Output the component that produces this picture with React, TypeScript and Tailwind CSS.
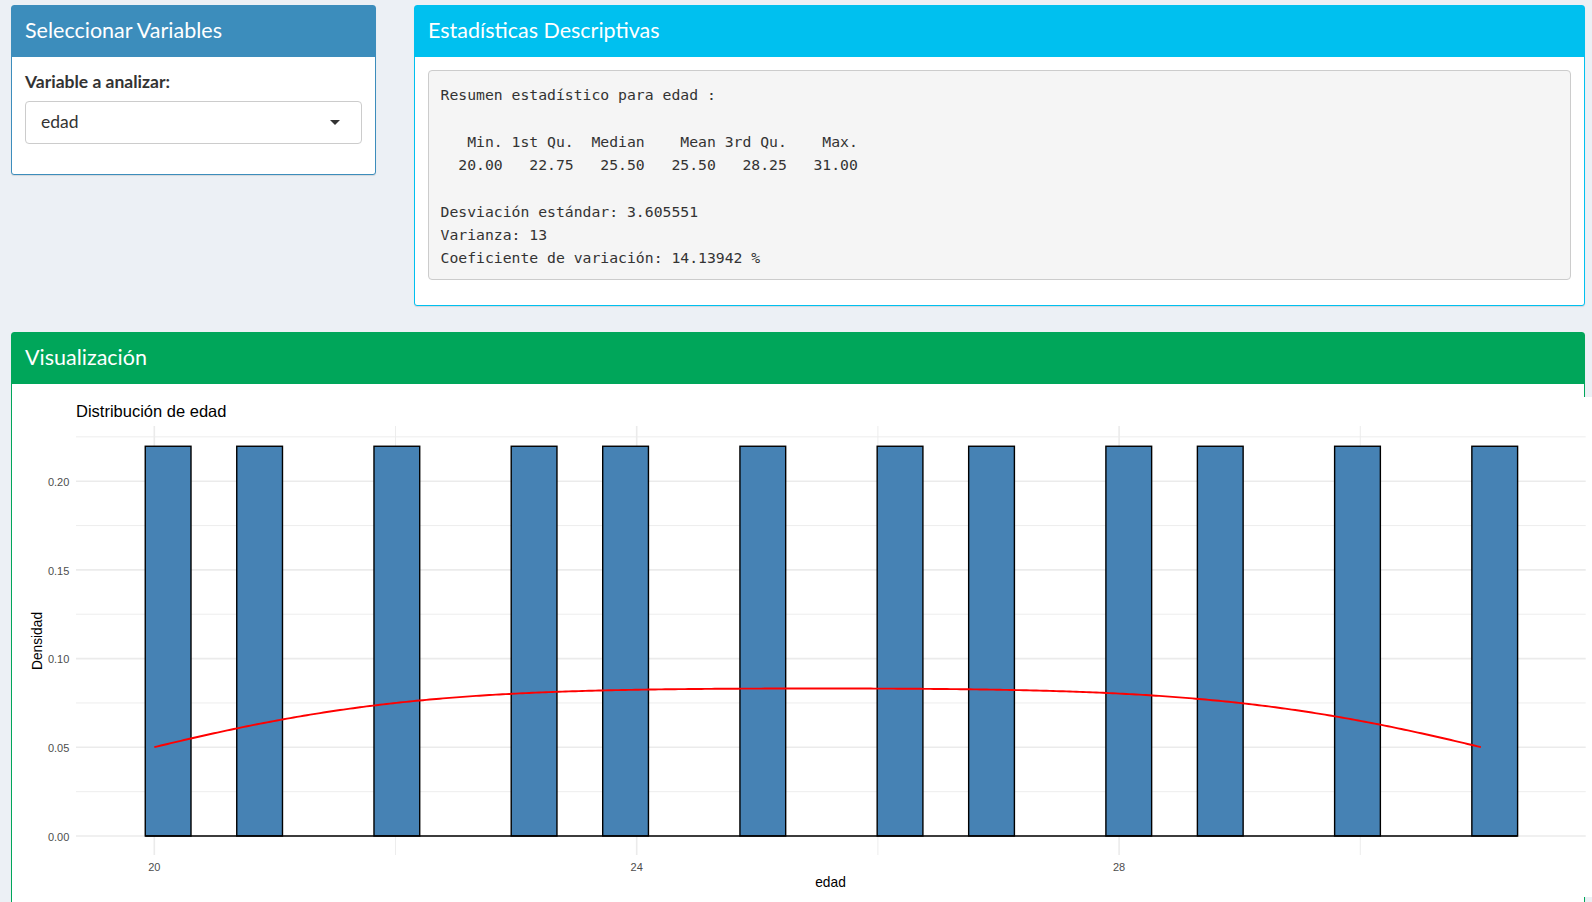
import React from "react";

const W = 1571;
const H = 500;
const xpx = (d: number) => 132.3 + (d - 20) * 120.6;
const ypx = (v: number) => 439 - v * 1774;
const BW = 11 / 29;
const B0 = 19.925;
const data = [20, 21, 22, 23, 24, 25, 26, 27, 28, 29, 30, 31];

function Chart() {
  const counts = new Array(30).fill(0);
  data.forEach((v) => {
    const k = Math.min(29, Math.floor((v - B0) / BW));
    counts[k]++;
  });
  const h = 1.9741;
  const pts: string[] = [];
  for (let i = 0; i <= 400; i++) {
    const x = 20 + (11 * i) / 400;
    let s = 0;
    data.forEach((xi) => {
      const z = (x - xi) / h;
      s += Math.exp(-0.5 * z * z);
    });
    const d = s / (data.length * h * Math.sqrt(2 * Math.PI));
    pts.push(`${xpx(x).toFixed(2)},${ypx(d).toFixed(2)}`);
  }
  const panelL = 54;
  const panelR = 1563.7;
  const panelT = 29;
  const panelB = 458;
  const majorY = [0, 0.05, 0.1, 0.15, 0.2];
  const minorY = [0.025, 0.075, 0.125, 0.175, 0.225];
  const majorX = [20, 24, 28];
  const minorX = [22, 26, 30];
  const font = '"Liberation Sans", Arial, sans-serif';
  return (
    <svg width={W} height={H} className="block shrink-0" style={{ fontFamily: font }}>
      <rect x={0} y={0} width={W} height={H} fill="#ffffff" />
      <text x={54} y={20.3} fontSize={16.5} fill="#000">
        Distribución de edad
      </text>
      {minorY.map((v) => (
        <line key={"my" + v} x1={panelL} x2={panelR} y1={ypx(v)} y2={ypx(v)} stroke="#EBEBEB" strokeWidth={0.9} />
      ))}
      {minorX.map((v) => (
        <line key={"mx" + v} x1={xpx(v)} x2={xpx(v)} y1={panelT} y2={panelB} stroke="#EBEBEB" strokeWidth={0.9} />
      ))}
      {majorY.map((v) => (
        <line key={"My" + v} x1={panelL} x2={panelR} y1={ypx(v)} y2={ypx(v)} stroke="#EBEBEB" strokeWidth={1.6} />
      ))}
      {majorX.map((v) => (
        <line key={"Mx" + v} x1={xpx(v)} x2={xpx(v)} y1={panelT} y2={panelB} stroke="#EBEBEB" strokeWidth={1.6} />
      ))}
      {counts.map((c, k) => {
        if (!c) return null;
        const x0 = xpx(B0 + k * BW);
        const x1 = xpx(B0 + (k + 1) * BW);
        const dens = c / (data.length * BW);
        const y = ypx(dens);
        return (
          <rect key={k} x={x0} y={y} width={x1 - x0} height={ypx(0) - y} fill="#4682B4" stroke="#000" strokeWidth={1.4} />
        );
      })}
      <line x1={xpx(B0)} x2={xpx(B0 + 30 * BW)} y1={ypx(0)} y2={ypx(0)} stroke="#000" strokeWidth={1.4} />
      <polyline points={pts.join(" ")} fill="none" stroke="#FF0000" strokeWidth={1.9} />
      {majorY.map((v) => (
        <text key={"ly" + v} x={47.3} y={ypx(v) + 0.8} dy="0.35em" textAnchor="end" fontSize={11} fill="#4D4D4D">
          {v.toFixed(2)}
        </text>
      ))}
      {majorX.map((v) => (
        <text key={"lx" + v} x={xpx(v)} y={470} dy="0.35em" textAnchor="middle" fontSize={11} fill="#4D4D4D">
          {v}
        </text>
      ))}
      <text x={808.5} y={485} dy="0.35em" textAnchor="middle" fontSize={13.75} fill="#000">
        edad
      </text>
      <text
        x={15.6}
        y={244}
        dy="0.35em"
        textAnchor="middle"
        fontSize={13.75}
        fill="#000"
        transform="rotate(-90 15.6 244)"
      >
        Densidad
      </text>
    </svg>
  );
}

const preText = `Resumen estadístico para edad :

   Min. 1st Qu.  Median    Mean 3rd Qu.    Max. 
  20.00   22.75   25.50   25.50   28.25   31.00 

Desviación estándar: 3.605551
Varianza: 13
Coeficiente de variación: 14.13942 %`;

export default function App() {
  const ui = { fontFamily: 'Lato, "Open Sans", sans-serif' };
  return (
    <div className="w-full h-[902px] overflow-hidden bg-[#ecf0f5] pt-[5px] pl-[11px] pr-[7px]" style={ui}>
      <div className="flex items-start gap-[38px]">
        <div className="w-[365px] shrink-0 rounded-[3px] border border-[#3c8dbc] bg-white shadow-[0_1px_1px_rgba(0,0,0,0.1)]">
          <div className="h-[51px] bg-[#3c8dbc] px-[13px] pb-[1px] flex items-center">
            <span className="text-white text-[21.5px] leading-none">Seleccionar Variables</span>
          </div>
          <div className="px-[13px] pt-[14px] pb-[30px]">
            <div className="text-[#333] text-[17.5px] font-bold leading-[21px] mb-[9px]">Variable a analizar:</div>
            <div className="h-[43px] rounded-[4px] border border-[#cccccc] bg-white flex items-center justify-between pl-[15px] pr-[21px]">
              <span className="text-[#333] text-[17.5px] leading-none pb-[2px]">edad</span>
              <span className="w-0 h-0 border-x-[5.5px] border-x-transparent border-t-[5px] border-t-[#333]"></span>
            </div>
          </div>
        </div>
        <div className="flex-1 rounded-[3px] border border-[#00c0ef] bg-white shadow-[0_1px_1px_rgba(0,0,0,0.1)]">
          <div className="h-[51px] bg-[#00c0ef] px-[13px] pb-[1px] flex items-center">
            <span className="text-white text-[21.5px] leading-none">Estadísticas Descriptivas</span>
          </div>
          <div className="px-[13px] pt-[13px] pb-[25px]">
            <pre
              className="m-0 rounded-[4px] border border-[#cccccc] bg-[#f5f5f5] text-[#333] pl-[11.5px] pt-[12px] pb-[9px] text-[14.75px] leading-[23.35px] whitespace-pre"
              style={{ fontFamily: '"DejaVu Sans Mono", "Liberation Mono", monospace' }}
            >
              {preText}
            </pre>
          </div>
        </div>
      </div>
      <div className="mt-[26px] rounded-[3px] border border-[#00a65a] bg-white shadow-[0_1px_1px_rgba(0,0,0,0.1)]">
        <div className="h-[51px] bg-[#00a65a] px-[13px] pb-[1px] flex items-center">
          <span className="text-white text-[21.5px] leading-none">Visualización</span>
        </div>
        <div className="pl-[10px] pt-[13px] pb-[10px]">
          <Chart />
        </div>
      </div>
    </div>
  );
}
